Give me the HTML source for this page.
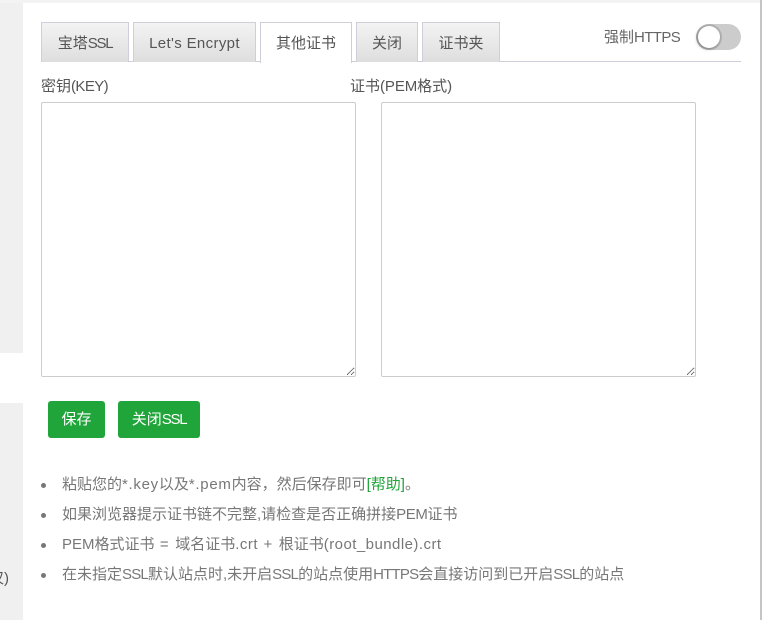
<!DOCTYPE html>
<html><head><meta charset="utf-8">
<style>
*{box-sizing:border-box}
html,body{margin:0;padding:0;width:762px;height:620px;overflow:hidden;background:#fff}
body{position:relative;font-family:"Liberation Sans","Noto Sans CJK SC",sans-serif;font-size:15px;color:#555}
.a{position:absolute;white-space:nowrap}
.tab{position:absolute;top:22px;height:40px;border:1px solid #cfcfdc;border-bottom:none;background:linear-gradient(#f3f3f3,#dedede);text-align:center;line-height:42px;color:#555;font-size:15px}
.tab.on{background:#fff;height:41px;z-index:2}
textarea{position:absolute;top:102px;height:275px;border:1px solid #ccc;border-radius:2px;background:#fff;margin:0;padding:0;outline:none}
.btn{position:absolute;top:401px;height:37px;background:#20a53a;border-radius:3px;color:#fff;text-align:center;line-height:37px;font-size:15px}
.li{position:absolute;left:62px;color:#777;font-size:15px;white-space:nowrap;line-height:20px}
.dot{position:absolute;left:41px;width:5px;height:5px;border-radius:50%;background:#777}
.s{letter-spacing:-1.3px}
.c{letter-spacing:-.8px}
.w{letter-spacing:.7px}
</style></head><body>
<div class="a" style="left:0;top:0;width:762px;height:3px;background:#f3f3f3"></div>
<div class="a" style="left:0;top:3px;width:23px;height:350px;background:#f0f0f0"></div>
<div class="a" style="left:0;top:403px;width:23px;height:217px;background:#f0f0f0"></div>
<div class="a" style="left:760px;top:0;width:2px;height:620px;background:#c4c4c4"></div>
<div class="a" style="left:-11px;top:569px;color:#555;line-height:20px">仅)</div>

<div class="a" style="left:41px;top:61px;width:700px;height:1px;background:#cfcfdc"></div>
<div class="tab" style="left:41px;width:88px">宝塔<span class="s">SSL</span></div>
<div class="tab" style="left:133px;width:123px;letter-spacing:.35px">Let's Encrypt</div>
<div class="tab on" style="left:260px;width:92px">其他证书</div>
<div class="tab" style="left:356px;width:62px">关闭</div>
<div class="tab" style="left:422px;width:78px">证书夹</div>

<div class="a" style="left:604px;top:28px;line-height:20px;color:#666">强制<span style="letter-spacing:-.6px">HTTPS</span></div>
<div class="a" style="left:696px;top:24px;width:45px;height:26px;border-radius:13px;background:#ccc"></div>
<div class="a" style="left:698px;top:26px;width:22px;height:22px;border-radius:50%;background:#fff;box-shadow:0 0 0 2px rgba(0,0,0,.12),-1px 1px 3px rgba(0,0,0,.3)"></div>

<div class="a" style="left:41px;top:77px;line-height:20px;color:#555">密钥<span style="letter-spacing:-.6px">(KEY)</span></div>
<div class="a" style="left:350px;top:77px;line-height:20px;color:#555">证书<span style="letter-spacing:-.1px">(PEM</span>格式)</div>
<textarea style="left:41px;width:315px"></textarea>
<textarea style="left:381px;width:315px"></textarea>

<div class="btn" style="left:48px;width:57px">保存</div>
<div class="btn" style="left:118px;width:82px">关闭<span class="s">SSL</span></div>

<div class="dot" style="top:483px"></div>
<div class="li" style="top:475px">粘贴您的<span class="w">*.key</span>以及<span class="w">*.pem</span>内容，然后保存即可<span style="color:#20a53a">[帮助]</span>。</div>
<div class="dot" style="top:513px"></div>
<div class="li" style="top:505px">如果浏览器提示证书链不完整,请检查是否正确拼接<span style="letter-spacing:-.4px">PEM</span>证书</div>
<div class="dot" style="top:543px"></div>
<div class="li" style="top:535px">PEM格式证书<span style="letter-spacing:1.2px"> = </span>域名证书<span style="letter-spacing:.5px">.crt</span><span style="letter-spacing:1.2px"> + </span>根证书<span style="letter-spacing:.45px">(root_bundle).crt</span></div>
<div class="dot" style="top:573px"></div>
<div class="li" style="top:565px">在未指定<span class="c">SSL</span>默认站点时,未开启<span class="c">SSL</span>的站点使用<span class="c">HTTPS</span>会直接访问到已开启<span class="c">SSL</span>的站点</div>
</body></html>
